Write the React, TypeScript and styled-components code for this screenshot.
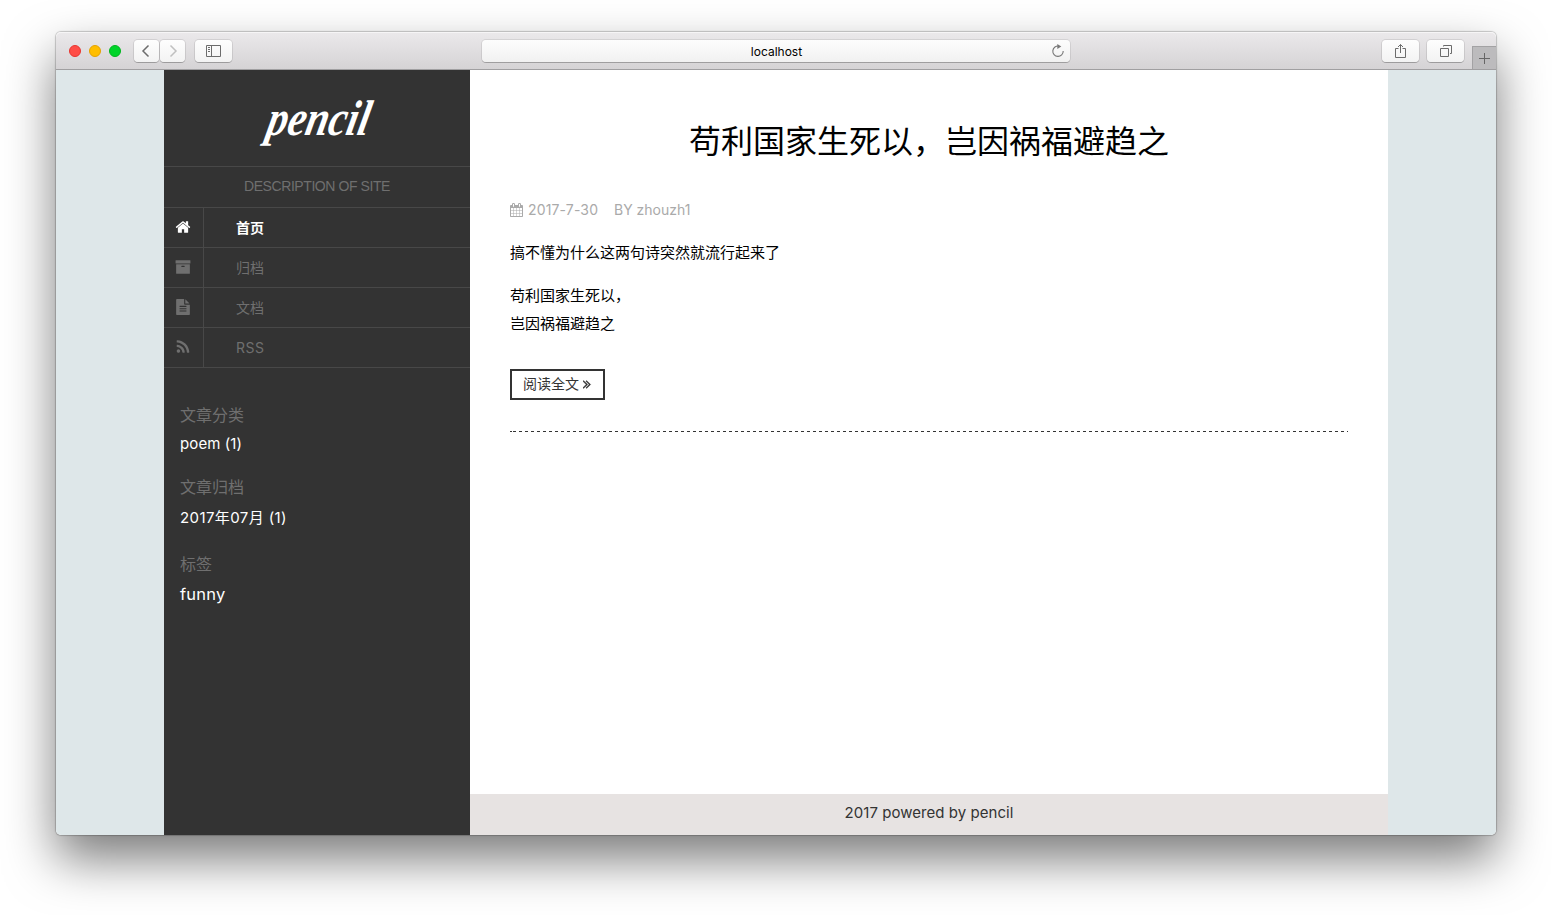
import React from 'react';
import styled, { createGlobalStyle } from 'styled-components';

const GlobalStyle = createGlobalStyle`
  html, body { margin: 0; background: #fff; }
  body {
    height: 915px;
    overflow: hidden;
    font-family: Inter, "Noto Sans CJK SC", sans-serif;
  }
  * { box-sizing: border-box; }
`;

const Desktop = styled.div`
  height: 915px;
  padding: 32px 56px 80px;
  overflow: hidden;
`;

const Window = styled.div`
  display: flex;
  flex-direction: column;
  width: 1440px;
  height: 803px;
  border-radius: 5px;
  box-shadow: 0 0 1px 1px rgba(0, 0, 0, 0.2), 0 24px 50px rgba(0, 0, 0, 0.52);
`;

const Toolbar = styled.header`
  display: grid;
  grid-template-columns: 426px 588px 1fr;
  height: 38px;
  flex: none;
  border-bottom: 1px solid #a09fa1;
  border-radius: 5px 5px 0 0;
  background: linear-gradient(#ebe9eb, #d5d3d5);
  box-shadow: inset 0 1px 0 #f6f5f6;
`;

const ToolGroup = styled.div`
  display: flex;
  align-items: flex-start;
  padding: 8px 0 0 13px;
`;

const Lights = styled.div`
  display: flex;
  gap: 8px;
  margin: 5px 13px 0 0;
`;

const Light = styled.span<{ $fill: string; $edge: string }>`
  width: 12px;
  height: 12px;
  border-radius: 50%;
  background: ${p => p.$fill};
  border: 1px solid ${p => p.$edge};
`;

const ToolButton = styled.button<{ $width: number; $after?: number }>`
  display: flex;
  align-items: center;
  justify-content: center;
  width: ${p => p.$width}px;
  height: 22px;
  margin: 0 ${p => p.$after ?? 0}px 0 0;
  padding: 0;
  border: 0;
  border-radius: 4px;
  background: linear-gradient(#fefefe, #f3f3f3);
  box-shadow: 0 0 0 1px rgba(0, 0, 0, 0.09), 0 1px 0 rgba(0, 0, 0, 0.2);
`;

const Address = styled.div`
  display: grid;
  grid-template-columns: 24px 1fr 19px 5px;
  align-items: center;
  height: 22px;
  margin-top: 8px;
  border-radius: 4px;
  background: linear-gradient(#fdfdfd, #f1f1f1);
  box-shadow: 0 0 0 1px rgba(0, 0, 0, 0.08), 0 1px 0 rgba(0, 0, 0, 0.2);
  text-align: center;
  font: 12px/22px Inter, sans-serif;
  color: #000;

  span { padding: 1px 0 0 1px; line-height: 21px; }
  svg { justify-self: end; }
`;

const RightTools = styled.div`
  display: flex;
  justify-content: flex-end;
  padding-top: 8px;
`;

const NewTab = styled.div`
  display: flex;
  align-items: center;
  justify-content: center;
  width: 24px;
  height: 23px;
  margin-top: 6px;
  border: 1px solid #a3a2a4;
  border-width: 1px 0 0 1px;
  background: #bcbbbd;
`;

const Viewport = styled.div`
  display: flex;
  justify-content: center;
  flex: 1;
  min-height: 0;
  background: #dee7e9;
  border-radius: 0 0 5px 5px;
`;

const Sidebar = styled.aside`
  width: 306px;
  background: #333;
  color: #fff;
`;

const Brand = styled.div`
  height: 97px;
  border-bottom: 1px solid #484848;
`;

const Description = styled.div`
  height: 41px;
  border-bottom: 1px solid #484848;
  font: 14px/38px "Liberation Sans", sans-serif;
  letter-spacing: -0.42px;
  text-align: center;
  color: #6f6f6f;
`;

const NavItem = styled.a<{ $active?: boolean; $track?: number }>`
  display: flex;
  height: 40px;
  border-bottom: 1px solid #484848;
  color: ${p => (p.$active ? '#fff' : '#6f6f6f')};
  font-weight: ${p => (p.$active ? 600 : 400)};
  font-size: 14px;
  line-height: 39px;
  letter-spacing: ${p => p.$track ?? 0}px;
`;

const NavIcon = styled.span`
  display: flex;
  align-items: center;
  justify-content: center;
  width: 40px;
  margin-right: 32px;
  padding: 0 1px 1px 0;
  border-right: 1px solid #484848;
`;

const Widgets = styled.div`
  padding: 35px 16px 0;
`;

const Widget = styled.section<{ $row: number; $size: number; $track?: number; $after: number }>`
  margin-bottom: ${p => p.$after}px;
  font-size: ${p => p.$size}px;
  line-height: ${p => p.$row}px;
  letter-spacing: ${p => p.$track ?? 0}px;
`;

const WidgetTitle = styled.h3`
  margin: 0;
  font-size: 16px;
  font-weight: 400;
  line-height: 24px;
  letter-spacing: 0;
  color: #6f6f6f;
`;

const Main = styled.main`
  display: flex;
  flex-direction: column;
  width: 918px;
  background: #fff;
`;

const Article = styled.article`
  flex: 1;
  padding: 48px 40px 0;
`;

const Title = styled.h1`
  margin: 0 0 34px;
  font-size: 32px;
  line-height: 48px;
  font-weight: 400;
  text-align: center;
  color: #000;
`;

const Meta = styled.div`
  display: flex;
  align-items: center;
  height: 20px;
  font-size: 14px;
  line-height: 20px;
  color: #aaa;
`;

const PostDate = styled.span`
  width: 86px;
  margin-left: 4px;
  letter-spacing: 0.15px;
`;

const Text = styled.p`
  margin: 0 0 15px;
  font-size: 15px;
  line-height: 28px;
  color: #000;
`;

const Body = styled.div`
  padding-top: 19px;
`;

const ReadMore = styled.a`
  display: flex;
  align-items: center;
  width: 95px;
  height: 31px;
  margin-top: 31px;
  padding: 0 0 2px 11px;
  border: 2px solid #333;
  font-size: 14px;
  line-height: 25px;
  color: #333;

  svg { margin: 1px 0 0 4px; stroke: currentColor; stroke-width: 50px; }
`;

const Divider = styled.div`
  height: 1px;
  margin-top: 31px;
  background:
    linear-gradient(#333, #333) 0 0 / 2px 1px no-repeat,
    repeating-linear-gradient(90deg, transparent 0 3px, #333 3px 6px);
`;

const Footer = styled.footer`
  height: 41px;
  background: #e7e3e2;
  text-align: center;
  font-size: 15px;
  line-height: 38px;
  letter-spacing: 0.05px;
  color: #333;
`;

const glyphs = {
  home: 'M1472 992v480q0 26-19 45t-45 19h-384v-384h-256v384h-384q-26 0-45-19t-19-45v-480q0-1 .5-3t.5-3l575-474 575 474q1 2 1 6zm223-69l-62 74q-8 9-21 11h-3q-13 0-21-7l-692-577-692 577q-12 8-24 7-13-2-21-11l-62-74q-8-10-7-23.5t11-21.5l719-599q32-26 76-26t76 26l244 204v-195q0-14 9-23t23-9h192q14 0 23 9t9 23v408l219 182q10 8 11 21.5t-7 23.5z',
  archive: 'M1088 832q0-26-19-45t-45-19h-256q-26 0-45 19t-19 45 19 45 45 19h256q26 0 45-19t19-45zm576-192v960q0 26-19 45t-45 19h-1408q-26 0-45-19t-19-45v-960q0-26 19-45t45-19h1408q26 0 45 19t19 45zm64-448v256q0 26-19 45t-45 19h-1536q-26 0-45-19t-19-45v-256q0-26 19-45t45-19h1536q26 0 45 19t19 45z',
  file: 'M1596 476q14 14 28 36h-472v-472q22 14 36 28zm-476 164h544v1056q0 40-28 68t-68 28h-1344q-40 0-68-28t-28-68v-1600q0-40 28-68t68-28h800v544q0 40 28 68t68 28zm160 736v-64q0-14-9-23t-23-9h-704q-14 0-23 9t-9 23v64q0 14 9 23t23 9h704q14 0 23-9t9-23zm0-256v-64q0-14-9-23t-23-9h-704q-14 0-23 9t-9 23v64q0 14 9 23t23 9h704q14 0 23-9t9-23zm0-256v-64q0-14-9-23t-23-9h-704q-14 0-23 9t-9 23v64q0 14 9 23t23 9h704q14 0 23-9t9-23z',
  rss: 'M576 1344q0 80-56 136t-136 56-136-56-56-136 56-136 136-56 136 56 56 136zm512 123q2 28-17 48-18 21-47 21h-135q-25 0-43-16.5t-20-41.5q-22-229-184.5-391.5t-391.5-184.5q-25-2-41.5-20t-16.5-43v-135q0-29 21-47 17-17 43-17h5q160 13 306 80.5t259 181.5q114 113 181.5 259t80.5 306zm512 2q2 27-18 47-18 20-46 20h-143q-26 0-44.5-17.5t-19.5-42.5q-12-215-101-408.5t-231.5-336-336-231.5-408.5-102q-25-1-42.5-19.5t-17.5-43.5v-143q0-28 20-46 18-18 44-18h3q262 13 501.5 120t425.5 294q187 186 294 425.5t120 501.5z',
  calendar: 'M192 1664h288v-288h-288v288zm352 0h320v-288h-320v288zm-352-352h288v-320h-288v320zm352 0h320v-320h-320v320zm-352-384h288v-288h-288v288zm736 736h320v-288h-320v288zm-384-736h320v-288h-320v288zm768 736h288v-288h-288v288zm-384-352h320v-320h-320v320zm-352-864v-288q0-13-9.500-22.500t-22.500-9.500h-64q-13 0-22.500 9.500t-9.500 22.500v288q0 13 9.500 22.500t22.500 9.500h64q13 0 22.500-9.500t9.500-22.500zm736 864h288v-320h-288v320zm-384-384h320v-288h-320v288zm384 0h288v-288h-288v288zm32-480v-288q0-13-9.500-22.500t-22.500-9.500h-64q-13 0-22.500 9.500t-9.500 22.500v288q0 13 9.500 22.500t22.500 9.500h64q13 0 22.500-9.500t9.500-22.500zm384-64v1280q0 52-38 90t-90 38h-1408q-52 0-90-38t-38-90v-1280q0-52 38-90t90-38h128v-96q0-66 47-113t113-47h64q66 0 113 47t47 113v96h384v-96q0-66 47-113t113-47h64q66 0 113 47t47 113v96h128q52 0 90 38t38 90z',
  more: 'M979 960q0 13-10 23l-466 466q-10 10-23 10t-23-10l-50-50q-10-10-10-23t10-23l393-393-393-393q-10-10-10-23t10-23l50-50q10-10 23-10t23 10l466 466q10 10 10 23zm384 0q0 13-10 23l-466 466q-10 10-23 10t-23-10l-50-50q-10-10-10-23t10-23l393-393-393-393q-10-10-10-23t10-23l50-50q10-10 23-10t23 10l466 466q10 10 10 23z',
};

function Glyph({ name, size, box = '0 0 1792 1792' }: { name: keyof typeof glyphs; size: number; box?: string }) {
  return (
    <svg width={size} height={size} viewBox={box} fill="currentColor">
      <path d={glyphs[name]} />
    </svg>
  );
}

const nav: { icon: keyof typeof glyphs; label: string; track?: number }[] = [
  { icon: 'home', label: '首页' },
  { icon: 'archive', label: '归档' },
  { icon: 'file', label: '文档' },
  { icon: 'rss', label: 'RSS', track: 0.5 },
];

export default function App() {
  return (
    <>
      <GlobalStyle />
      <Desktop>
        <Window>
          <Toolbar>
            <ToolGroup>
              <Lights>
                <Light $fill="#ff4d47" $edge="#e8352f" />
                <Light $fill="#ffbe00" $edge="#e5a200" />
                <Light $fill="#00d42a" $edge="#00b51e" />
              </Lights>
              <ToolButton $width={25} $after={1}>
                <svg width="12" height="14" viewBox="0 0 12 14" fill="none" stroke="#6c6c6c" strokeWidth="1.5"><path d="M7.500 1.500L2 7l5.500 5.500" /></svg>
              </ToolButton>
              <ToolButton $width={25} $after={10}>
                <svg width="10" height="14" viewBox="0 0 10 14" fill="none" stroke="#c0c0c0" strokeWidth="1.5"><path d="M2.500 1.500L8 7l-5.500 5.500" /></svg>
              </ToolButton>
              <ToolButton $width={37}>
                <svg width="15" height="12" viewBox="0 0 15 12" fill="none" stroke="#6c6c6c"><path d="M.5.500h14v11H.5zM5.500.500v11M2 2.500h2M2 4.500h2M2 6.500h2" /></svg>
              </ToolButton>
            </ToolGroup>
            <Address>
              <i />
              <span>localhost</span>
              <svg width="14" height="14" viewBox="0 0 14 14" fill="none" stroke="#777" strokeWidth="1.1">
                <path d="M8 2.100A5.200 5.200 0 1 0 12.200 7" />
                <path d="M6.300 0l4 2.500-4 2.500z" fill="#777" stroke="none" />
              </svg>
            </Address>
            <RightTools>
              <ToolButton $width={37} $after={8}>
                <svg width="13" height="16" viewBox="0 0 13 16" fill="none" stroke="#6c6c6c"><path d="M4.500 5.500H1.500v9h10v-9h-3M6.500 10V1.500M4 4l2.500-2.500L9 4" /></svg>
              </ToolButton>
              <ToolButton $width={37} $after={8}>
                <svg width="13" height="14" viewBox="0 0 13 14" fill="none" stroke="#6c6c6c"><path d="M1.500 4.500h8v8h-8zM4.500 2.500v-1h8v8h-1.500" /></svg>
              </ToolButton>
              <NewTab>
                <svg width="11" height="11" viewBox="0 0 11 11" stroke="#666"><path d="M5.500 0v11M0 5.500h11" /></svg>
              </NewTab>
            </RightTools>
          </Toolbar>
          <Viewport>
            <Sidebar>
              <Brand>
                <svg width="306" height="96" viewBox="0 0 306 96">
                  <text
                    transform="translate(101 65) skewX(-12)"
                    textLength="102"
                    lengthAdjust="spacingAndGlyphs"
                    fontFamily="Liberation Serif, serif"
                    fontStyle="italic"
                    fontWeight="700"
                    fontSize="50"
                    fill="#fff"
                  >
                    pencil
                  </text>
                </svg>
              </Brand>
              <Description>DESCRIPTION OF SITE</Description>
              <nav>
                {nav.map((item, i) => (
                  <NavItem key={item.icon} $active={i === 0} $track={item.track}>
                    <NavIcon><Glyph name={item.icon} size={16} /></NavIcon>
                    {item.label}
                  </NavItem>
                ))}
              </nav>
              <Widgets>
                <Widget $row={34} $size={15} $track={0.1} $after={14}>
                  <WidgetTitle>文章分类</WidgetTitle>
                  poem (1)
                </Widget>
                <Widget $row={38} $size={15} $track={0.4} $after={15}>
                  <WidgetTitle>文章归档</WidgetTitle>
                  2017年07月 (1)
                </Widget>
                <Widget $row={36} $size={16.5} $track={0.2} $after={0}>
                  <WidgetTitle>标签</WidgetTitle>
                  funny
                </Widget>
              </Widgets>
            </Sidebar>
            <Main>
              <Article>
                <Title>苟利国家生死以，岂因祸福避趋之</Title>
                <Meta>
                  <Glyph name="calendar" size={14} box="64 0 1792 1792" />
                  <PostDate>2017-7-30</PostDate>
                  <span>BY zhouzh1</span>
                </Meta>
                <Body>
                  <Text>搞不懂为什么这两句诗突然就流行起来了</Text>
                  <Text>苟利国家生死以，<br />岂因祸福避趋之</Text>
                  <ReadMore>阅读全文<Glyph name="more" size={14} box="400 0 1792 1792" /></ReadMore>
                </Body>
                <Divider />
              </Article>
              <Footer>2017 powered by pencil</Footer>
            </Main>
          </Viewport>
        </Window>
      </Desktop>
    </>
  );
}
